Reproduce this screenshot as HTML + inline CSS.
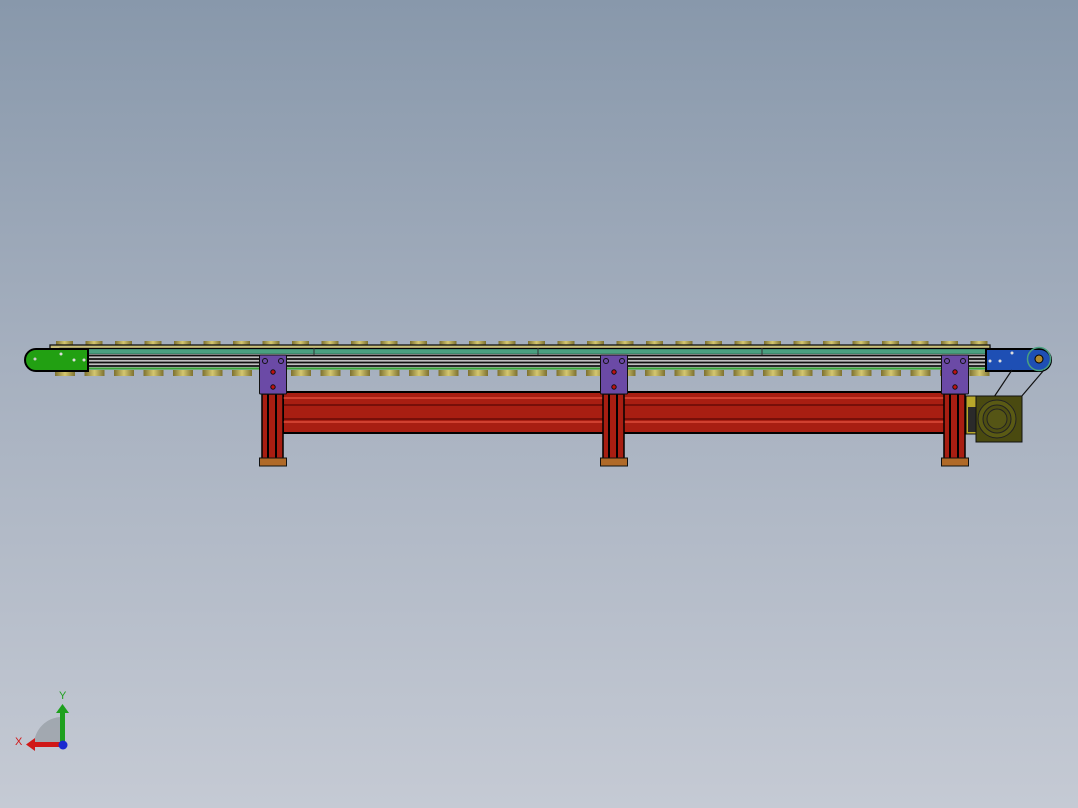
<!DOCTYPE html>
<html><head><style>
html,body{margin:0;padding:0;width:1078px;height:808px;overflow:hidden}
body{background:linear-gradient(#8898ab 0%,#a6b0bf 45%,#c5cad4 100%)}
</style></head><body>
<svg width="1078" height="808" viewBox="0 0 1078 808" xmlns="http://www.w3.org/2000/svg" style="position:absolute;left:0;top:0">
<defs>
<linearGradient id="rol" x1="0" x2="1"><stop offset="0" stop-color="#7d7130"/><stop offset="0.5" stop-color="#d4c770"/><stop offset="1" stop-color="#7d7130"/></linearGradient>
<pattern id="tr" x="56" y="0" width="29.5" height="808" patternUnits="userSpaceOnUse"><rect x="0" y="341" width="17" height="5" fill="url(#rol)"/></pattern>
<pattern id="br" x="55" y="0" width="29.5" height="808" patternUnits="userSpaceOnUse"><rect x="0" y="370" width="20" height="6" fill="url(#rol)"/></pattern>
</defs>
<rect x="50" y="340" width="940" height="7" fill="url(#tr)"/>
<rect x="50" y="369" width="940" height="8" fill="url(#br)"/>
<rect x="50" y="345" width="940" height="4" fill="#c9bf7a" stroke="#111" stroke-width="1.3"/>
<rect x="60" y="348.5" width="930" height="6" fill="#4aa080" stroke="#000" stroke-width="1.3"/>
<rect x="60" y="354" width="930" height="14" fill="#c0c0c0"/>
<g stroke="#111" stroke-width="1.8">
<line x1="60" y1="355.5" x2="990" y2="355.5"/><line x1="60" y1="359" x2="990" y2="359"/><line x1="60" y1="362.5" x2="990" y2="362.5"/><line x1="60" y1="366" x2="990" y2="366"/>
</g>
<rect x="60" y="367.5" width="930" height="2" fill="#3aa83a"/>
<g stroke="#333" stroke-width="1"><line x1="314" y1="348" x2="314" y2="355"/><line x1="538" y1="348" x2="538" y2="355"/><line x1="762" y1="348" x2="762" y2="355"/></g>
<path d="M88 349 H36 A11 11 0 0 0 36 371 H88 Z" fill="#22a012" stroke="#000" stroke-width="2"/>
<circle cx="35" cy="359" r="1.5" fill="#ccc"/><circle cx="61" cy="354" r="1.5" fill="#ddd"/><circle cx="74" cy="360" r="1.5" fill="#ddd"/><circle cx="84" cy="360" r="1.5" fill="#ddd"/>
<path d="M986 349 H1040 A11 11 0 0 1 1040 371 H986 Z" fill="#1e4fb4" stroke="#000" stroke-width="2"/>
<circle cx="1039" cy="359" r="11.5" fill="none" stroke="#4aa080" stroke-width="1.5"/>
<circle cx="1039" cy="359" r="4" fill="#b08a30" stroke="#000"/>
<circle cx="990" cy="361" r="1.5" fill="#ddd"/><circle cx="1000" cy="361" r="1.5" fill="#ddd"/><circle cx="1012" cy="353" r="1.5" fill="#ddd"/>
<g stroke="#111" stroke-width="1.2"><line x1="1012" y1="370" x2="994" y2="397"/><line x1="1044" y1="370" x2="1021" y2="397"/></g>
<rect x="283" y="392" width="665" height="41" fill="#a81e12" stroke="#000" stroke-width="2"/>
<rect x="283" y="397" width="665" height="2" fill="#d04030"/>
<line x1="283" y1="405" x2="948" y2="405" stroke="#400" stroke-width="1"/>
<line x1="283" y1="419" x2="948" y2="419" stroke="#400" stroke-width="1"/>
<rect x="283" y="421" width="665" height="2" fill="#d04030"/>
<rect x="966" y="396" width="10" height="38" fill="#b8a82a" stroke="#111"/>
<rect x="968" y="407" width="10" height="25" fill="#2a2a2a"/>
<rect x="976" y="396" width="46" height="46" fill="#4a4a10" stroke="#111"/>
<circle cx="997" cy="419" r="19" fill="#5a5a14" stroke="#222"/>
<circle cx="997" cy="419" r="14" fill="#4e4e12" stroke="#222"/>
<circle cx="997" cy="419" r="10" fill="#555515" stroke="#222"/>
<g id="s">
<rect x="262" y="394" width="21" height="65" fill="#a81e12" stroke="#000" stroke-width="1.5"/>
<line x1="268" y1="394" x2="268" y2="459" stroke="#000" stroke-width="2"/><line x1="276" y1="394" x2="276" y2="459" stroke="#000" stroke-width="2"/>
<rect x="259.5" y="458" width="27" height="8" fill="#b06a28" stroke="#111"/>
<rect x="259.5" y="355" width="27" height="39" fill="#6b4aa6" stroke="#111" rx="1"/>
<circle cx="265" cy="361" r="2.5" fill="none" stroke="#111"/><circle cx="281" cy="361" r="2.5" fill="none" stroke="#111"/>
<circle cx="273" cy="372" r="2.2" fill="#c01010" stroke="#111"/><circle cx="273" cy="387" r="2.2" fill="#c01010" stroke="#111"/>
</g>
<use href="#s" x="341"/>
<use href="#s" x="682"/>
<path d="M62 745 L34 745 A28 28 0 0 1 62 717 Z" fill="#9aa0a8" opacity="0.8"/>
<rect x="60" y="712" width="5" height="33" fill="#1ea01e"/>
<path d="M56 713 L62.5 704 L69 713 Z" fill="#1ea01e"/>
<rect x="34" y="742" width="28" height="5" fill="#d01818"/>
<path d="M35 738 L26 744.5 L35 751 Z" fill="#d01818"/>
<circle cx="63" cy="745" r="4.5" fill="#1a2ad0"/>
<text x="59" y="699" font-family="Liberation Sans, sans-serif" font-size="11" fill="#1ea01e">Y</text>
<text x="15" y="745" font-family="Liberation Sans, sans-serif" font-size="11" fill="#d01818">X</text>
</svg>
</body></html>
